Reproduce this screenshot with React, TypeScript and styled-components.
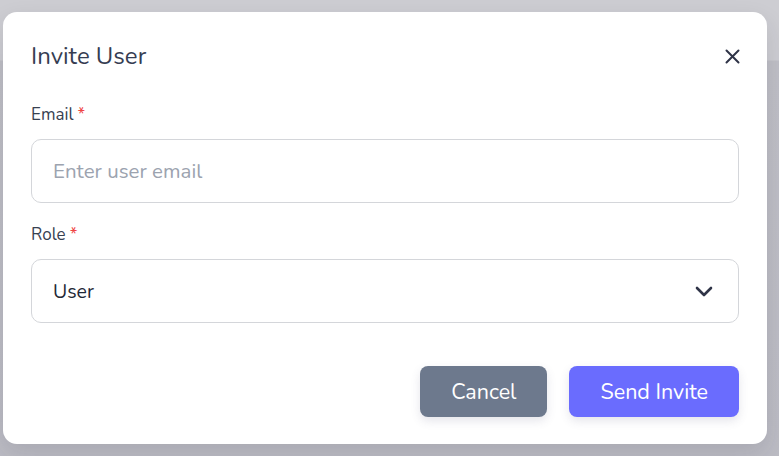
import styled, { createGlobalStyle } from "styled-components"

const GlobalStyle = createGlobalStyle`
  * { box-sizing: border-box; }
  html, body { margin: 0; padding: 0; }
  body {
    font-family: Nunito, Lato, "Open Sans", sans-serif;
    background: #bdbdc5;
  }
`

const Backdrop = styled.div`
  width: 779px;
  height: 456px;
  display: flex;
  flex-direction: column;
  background: linear-gradient(to bottom, #cdcdd2 0, #cdcdd2 60px, #bfbfc6 61px, #bcbcc4 100%);
  padding: 12px 12px 12px 3px;
`

const Modal = styled.div`
  width: 764px;
  height: 432px;
  background: #ffffff;
  border-radius: 14px;
  padding: 28px 28px 27px 28px;
  display: flex;
  flex-direction: column;
  box-shadow: 0 10px 25px rgba(30, 30, 50, 0.12);
`

const Header = styled.div`
  display: flex;
  align-items: center;
  justify-content: space-between;
  height: 32px;
  margin-bottom: 31px;
`

const Title = styled.h2`
  margin: 0;
  font-size: 24px;
  font-weight: 400;
  color: #363d52;
  line-height: 32px;
`

const CloseButton = styled.button`
  border: none;
  background: none;
  padding: 0;
  width: 16px;
  height: 16px;
  margin-right: -1px;
  display: flex;
  align-items: center;
  justify-content: center;
  color: #2f3447;
  cursor: pointer;
`

const Field = styled.div<{ $last?: boolean }>`
  display: flex;
  flex-direction: column;
  gap: 12px;
  margin-bottom: ${(p) => (p.$last ? "43px" : "20px")};
`

const Label = styled.label`
  font-size: 17px;
  line-height: 24px;
  color: #374151;
`

const Required = styled.span`
  color: #ef4444;
  margin-left: 4px;
`

const Input = styled.input`
  height: 64px;
  width: 100%;
  border: 1px solid #d4d6da;
  border-radius: 10px;
  padding: 0 21px;
  font-family: inherit;
  font-size: 20.5px;
  color: #1f2937;
  outline: none;
  &::placeholder {
    color: #9ca3af;
  }
`

const SelectBox = styled.div`
  height: 64px;
  border: 1px solid #d4d6da;
  border-radius: 10px;
  padding: 0 25px 0 21px;
  display: flex;
  align-items: center;
  justify-content: space-between;
  font-size: 19.5px;
  color: #1f2937;
`

const Footer = styled.div`
  display: flex;
  justify-content: flex-end;
  gap: 22px;
`

const Button = styled.button<{ $variant: "cancel" | "primary" }>`
  height: 51px;
  border: none;
  border-radius: 8px;
  font-family: inherit;
  font-size: 21.5px;
  color: #ffffff;
  padding: 0 31px;
  background: ${(p) => (p.$variant === "primary" ? "#6a6cfe" : "#6d798d")};
  box-shadow: 0 4px 10px rgba(80, 80, 120, 0.15);
  cursor: pointer;
`

export default function App() {
  return (
    <>
      <GlobalStyle />
      <Backdrop>
        <Modal>
          <Header>
            <Title>Invite User</Title>
            <CloseButton aria-label="Close">
              <svg width="15" height="15" viewBox="0 0 15 15" fill="none" stroke="currentColor" strokeWidth="2" strokeLinecap="round">
                <path d="M1.5 1.5 L13.5 13.5 M13.5 1.5 L1.5 13.5" />
              </svg>
            </CloseButton>
          </Header>
          <Field>
            <Label>
              Email<Required>*</Required>
            </Label>
            <Input placeholder="Enter user email" />
          </Field>
          <Field $last>
            <Label>
              Role<Required>*</Required>
            </Label>
            <SelectBox>
              <span>User</span>
              <svg width="18" height="12" viewBox="0 0 18 12" fill="none" stroke="#2f3447" strokeWidth="2.6" strokeLinecap="round" strokeLinejoin="round">
                <path d="M2 3 L9 10 L16 3" />
              </svg>
            </SelectBox>
          </Field>
          <Footer>
            <Button $variant="cancel">Cancel</Button>
            <Button $variant="primary">Send Invite</Button>
          </Footer>
        </Modal>
      </Backdrop>
    </>
  )
}
